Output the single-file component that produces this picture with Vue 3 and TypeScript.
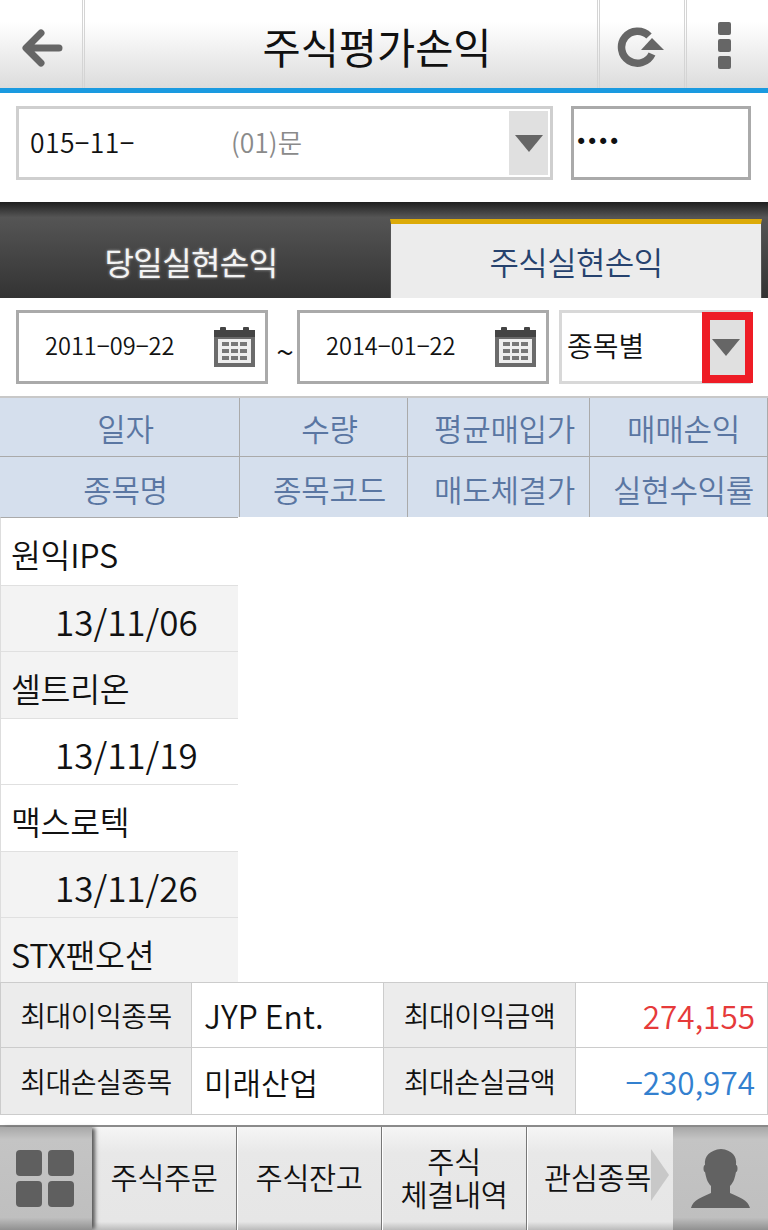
<script setup lang="ts">
type ListRow = {
    text: string;
    isDate: boolean;
    isShaded: boolean;
};

const headerTop = ["일자", "수량", "평균매입가", "매매손익"];
const headerBottom = ["종목명", "종목코드", "매도체결가", "실현수익률"];

const listRows: ListRow[] = [
    { text: "원익IPS", isDate: false, isShaded: false },
    { text: "13/11/06", isDate: true, isShaded: true },
    { text: "셀트리온", isDate: false, isShaded: true },
    { text: "13/11/19", isDate: true, isShaded: false },
    { text: "맥스로텍", isDate: false, isShaded: false },
    { text: "13/11/26", isDate: true, isShaded: true },
    { text: "STX팬오션", isDate: false, isShaded: true },
];

const dates = ["2011−09−22", "2014−01−22"];
</script>

<template>
    <div class="page">
        <header class="top-bar">
            <div class="top-bar__btn top-bar__btn--back">
                <svg width="46" height="42" viewBox="0 0 46 42">
                    <path d="M22 6 L7 21 L22 36 M8 21 H40" fill="none" stroke="#666" stroke-width="7" stroke-linecap="round" stroke-linejoin="round" />
                </svg>
            </div>
            <h1 class="top-bar__title">주식평가손익</h1>
            <div class="top-bar__btn top-bar__btn--refresh">
                <svg width="48" height="42" viewBox="0 0 48 42">
                    <path d="M35 28 A16 16 0 1 1 32 10" fill="none" stroke="#666" stroke-width="7.5" />
                    <path d="M35 12 L24 24 L47 24 Z" fill="#666" />
                </svg>
            </div>
            <div class="top-bar__btn top-bar__btn--more">
                <span class="dot" /><span class="dot" /><span class="dot" />
            </div>
        </header>

        <section class="account">
            <div class="account__select">
                <span class="account__no">015−11−</span>
                <span class="account__name">(01)문</span>
                <span class="arrow-box"><span class="arrow" /></span>
            </div>
            <div class="account__pw">••••</div>
        </section>

        <nav class="tabs">
            <div class="tabs__item">당일실현손익</div>
            <div class="tabs__item tabs__item--active">주식실현손익</div>
        </nav>

        <section class="filter">
            <template v-for="(date, i) in dates" :key="date">
                <span v-if="i === 1" class="filter__tilde">~</span>
                <div class="date-box">
                    <span class="date-box__text">{{ date }}</span>
                    <svg width="42" height="42" viewBox="0 0 42 42">
                        <rect x="1" y="4" width="41" height="37" fill="#6b6b6b" />
                        <rect x="1" y="4" width="41" height="7" fill="#444" />
                        <rect x="7" y="1" width="6" height="6" rx="1" fill="#444" />
                        <rect x="30" y="1" width="6" height="6" rx="1" fill="#444" />
                        <rect x="5" y="13" width="33" height="24" fill="#eee" />
                        <g fill="#777">
                            <rect x="9" y="16" width="7" height="4" /><rect x="18" y="16" width="7" height="4" /><rect x="27" y="16" width="7" height="4" />
                            <rect x="9" y="23" width="7" height="4" /><rect x="18" y="23" width="7" height="4" /><rect x="27" y="23" width="7" height="4" />
                            <rect x="9" y="30" width="7" height="4" /><rect x="18" y="30" width="7" height="4" /><rect x="27" y="30" width="7" height="4" />
                        </g>
                    </svg>
                </div>
            </template>
            <div class="kind-select">
                <span class="kind-select__text">종목별</span>
                <span class="kind-select__btn"><span class="arrow" /></span>
            </div>
        </section>

        <section class="grid-head">
            <div v-for="label in headerTop" :key="label" class="grid-head__cell">{{ label }}</div>
            <div v-for="label in headerBottom" :key="label" class="grid-head__cell grid-head__cell--bottom">{{ label }}</div>
        </section>

        <section class="list">
            <div
                v-for="row in listRows"
                :key="row.text"
                class="list__row"
                :class="{ 'list__row--date': row.isDate, 'list__row--shaded': row.isShaded }"
            >
                {{ row.text }}
            </div>
        </section>

        <section class="summary">
            <div class="summary__label">최대이익종목</div>
            <div class="summary__value summary__value--latin">JYP Ent.</div>
            <div class="summary__label">최대이익금액</div>
            <div class="summary__value summary__value--num summary__value--up">274,155</div>
            <div class="summary__label">최대손실종목</div>
            <div class="summary__value">미래산업</div>
            <div class="summary__label">최대손실금액</div>
            <div class="summary__value summary__value--num summary__value--down">−230,974</div>
        </section>

        <footer class="bottom-bar">
            <div class="bottom-bar__side bottom-bar__side--left">
                <div class="tiles"><span /><span /><span /><span /></div>
            </div>
            <div class="bottom-bar__item">주식주문</div>
            <div class="bottom-bar__item">주식잔고</div>
            <div class="bottom-bar__item">주식<br />체결내역</div>
            <div class="bottom-bar__item bottom-bar__item--last">
                관심종목
                <span class="bottom-bar__more" />
            </div>
            <div class="bottom-bar__side bottom-bar__side--right">
                <svg width="62" height="62" viewBox="0 0 62 62">
                    <path d="M1 60 C3 52 12 49 21 45 L21 38 C17 34 16 29 15 24 C13 24 13 17 15 17 C14 8 20 2 31 1 C42 2 47 8 46 17 C48 17 48 24 46 24 C45 29 44 34 40 38 L40 45 C49 49 58 52 60 60 Z" fill="#626262" />
                </svg>
            </div>
        </footer>
    </div>
</template>

<style>
    html,
    body {
        margin: 0;
        background: #fff;
    }
</style>

<style scoped>
    .page {
        width: 768px;
        height: 1230px;
        display: flex;
        flex-direction: column;
        overflow: hidden;
        background: #fff;
        color: #111;
        font-family: "Noto Sans CJK KR", "Noto Sans", sans-serif;
        font-weight: 350;
    }

    .top-bar {
        flex: none;
        height: 88px;
        display: flex;
        box-sizing: content-box;
        border-bottom: 5px solid #1a9ae0;
        background: linear-gradient(#fff 0%, #fff 25%, #dcdcdc 100%);
    }

    .top-bar__btn {
        flex: none;
        display: flex;
        align-items: center;
        justify-content: center;
        box-sizing: border-box;
        padding-top: 6px;
    }

    .top-bar__btn--back {
        width: 85px;
        padding: 8px 0 0 2px;
        border-right: 3px double #d4d4d4;
    }

    .top-bar__btn--refresh {
        width: 87px;
        padding-right: 3px;
        border-left: 3px double #d4d4d4;
    }

    .top-bar__btn--more {
        width: 84px;
        flex-direction: column;
        gap: 4px;
        padding: 3px 7px 0 0;
        border-left: 3px double #d4d4d4;
    }

    .dot {
        width: 13px;
        height: 13px;
        border-radius: 2px;
        background: #666;
    }

    .top-bar__title {
        flex: 1;
        margin: 0;
        padding-left: 72px;
        text-align: center;
        font-size: 41.5px;
        font-weight: 400;
        line-height: 92px;
        color: #111;
    }

    .account {
        flex: none;
        display: flex;
        gap: 18px;
        padding: 13px 17px 22px 16px;
    }

    .account__select {
        position: relative;
        flex: none;
        box-sizing: border-box;
        width: 537px;
        height: 74px;
        display: flex;
        align-items: center;
        padding: 0 0 4px 11px;
        border: 3px solid #cfcfcf;
        font-size: 26.5px;
    }

    .account__no {
        width: 201px;
        letter-spacing: 0.4px;
    }

    .account__name {
        color: #8a8a8a;
    }

    .arrow-box {
        position: absolute;
        top: 2px;
        right: 2px;
        bottom: 2px;
        width: 39px;
        display: flex;
        align-items: center;
        justify-content: center;
        background: #e0e0e0;
    }

    .arrow {
        width: 0;
        height: 0;
        border-left: 14px solid transparent;
        border-right: 14px solid transparent;
        border-top: 17px solid #666;
    }

    .account__pw {
        flex: none;
        box-sizing: border-box;
        width: 180px;
        height: 74px;
        padding-left: 1px;
        border: 3px solid #aaa;
        font-family: "DejaVu Sans", sans-serif;
        font-size: 21px;
        font-weight: 400;
        line-height: 66px;
        letter-spacing: -1.4px;
        color: #111;
    }

    .tabs {
        flex: none;
        height: 96px;
        display: flex;
        background: linear-gradient(#1f1f1f 0%, #555 16%, #333 100%);
    }

    .tabs__item {
        flex: none;
        width: 382px;
        padding-top: 30px;
        box-sizing: border-box;
        text-align: center;
        font-size: 32px;
        font-weight: 400;
        line-height: 58px;
        letter-spacing: -0.6px;
        color: #f4f4f4;
        text-shadow: 0 0 3px #aaa;
    }

    .tabs__item--active {
        width: 372px;
        margin: 17px 6px 0 8px;
        padding-top: 8px;
        border: solid #555;
        border-width: 0 1px;
        border-top: 5px solid #dcaa08;
        background: #ececec;
        font-weight: 350;
        color: #26426e;
        text-shadow: none;
    }

    .filter {
        flex: none;
        display: flex;
        align-items: center;
        height: 74px;
        margin-top: 12px;
        padding-left: 16px;
    }

    .date-box {
        flex: none;
        box-sizing: border-box;
        width: 252px;
        height: 74px;
        display: flex;
        align-items: center;
        justify-content: space-between;
        padding: 0 10px 0 26px;
        border: 3px solid #aaa;
    }

    .date-box__text {
        padding-bottom: 4px;
        font-size: 23.6px;
    }

    .filter__tilde {
        flex: none;
        width: 29px;
        padding: 6px 0 0 5px;
        box-sizing: border-box;
        text-align: center;
        font-size: 32px;
    }

    .kind-select {
        position: relative;
        flex: none;
        box-sizing: border-box;
        width: 192px;
        height: 74px;
        margin-left: 10px;
        display: flex;
        align-items: center;
        padding: 0 0 4px 5px;
        border: 3px solid #d8d8d8;
        font-size: 28px;
    }

    .kind-select__btn {
        position: absolute;
        top: -1px;
        right: -5px;
        width: 51px;
        height: 71px;
        box-sizing: border-box;
        display: flex;
        align-items: center;
        justify-content: center;
        padding-right: 3px;
        border: 8px solid #ee1c25;
        background: #e0e0e0;
    }

    .grid-head {
        flex: none;
        display: grid;
        grid-template-columns: 240px 168px 182px 178px;
        grid-template-rows: 59px 60px;
        margin-top: 12px;
        box-sizing: border-box;
        border-top: 2px solid #c8c8c8;
        background: #d5dfed;
    }

    .grid-head__cell {
        display: flex;
        align-items: center;
        justify-content: center;
        box-sizing: border-box;
        padding-left: 12px;
        border-right: 1px solid #aaa;
        border-bottom: 1px solid #aaa;
        font-size: 31px;
        letter-spacing: -0.3px;
        color: #5a76a2;
        white-space: nowrap;
    }

    .grid-head__cell--bottom {
        padding-top: 3px;
        border-bottom: 0;
    }

    .grid-head__cell:nth-child(4n) {
        padding-left: 10px;
    }

    .list {
        flex: none;
        width: 238px;
        height: 465px;
        box-sizing: border-box;
        border-top: 1px solid #aaa;
        border-left: 1px solid #ddd;
        overflow: hidden;
    }

    .list__row {
        box-sizing: border-box;
        height: 66.5px;
        padding-left: 10px;
        border-bottom: 1px solid #e0e0e0;
        font-size: 32.5px;
        line-height: 71px;
        letter-spacing: -0.3px;
        white-space: nowrap;
        background: #fff;
    }

    .list__row:first-child {
        height: 67.5px;
    }

    .list__row--date {
        padding-left: 54px;
        font-size: 35px;
        line-height: 70px;
        letter-spacing: 0;
    }

    .list__row--shaded {
        background: #f3f3f3;
    }

    .summary {
        flex: none;
        display: grid;
        grid-template-columns: 191px 192px 192px 191px;
        grid-template-rows: 65px 66px;
        box-sizing: border-box;
        height: 133px;
        border: 1px solid #ccc;
    }

    .summary__label,
    .summary__value {
        display: flex;
        align-items: center;
        box-sizing: border-box;
        white-space: nowrap;
    }

    .summary__label {
        justify-content: center;
        border-right: 1px solid #ccc;
        border-bottom: 1px solid #ccc;
        background: #ececec;
        font-size: 28px;
        letter-spacing: -0.5px;
    }

    .summary__value {
        padding-left: 12px;
        border-right: 1px solid #ccc;
        border-bottom: 1px solid #ccc;
        font-size: 31px;
    }

    .summary__label:nth-child(n + 5),
    .summary__value:nth-child(n + 5) {
        border-bottom: 0;
    }

    .summary__value--latin {
        font-size: 32px;
    }

    .summary__value--num {
        justify-content: flex-end;
        padding-right: 12px;
        border-right: 0;
        font-size: 31.5px;
    }

    .summary__value--up {
        color: #e63a3a;
    }

    .summary__value--down {
        color: #3380cf;
    }

    .bottom-bar {
        flex: none;
        height: 105px;
        margin-top: 10px;
        display: flex;
        box-sizing: border-box;
        border-top: 2px solid #8a8a8a;
        background: linear-gradient(#f5f5f5 0%, #e8e8e8 25%, #e6e6e6 92%, #bbb 100%);
    }

    .bottom-bar__side {
        flex: none;
        display: flex;
        align-items: center;
        justify-content: center;
        background: linear-gradient(#a8a8a8 0%, #c4c4c4 12%, #bfbfbf 88%, #909090 100%);
    }

    .bottom-bar__side--left {
        position: relative;
        width: 92px;
        padding-right: 2px;
        box-sizing: border-box;
        box-shadow: 4px 0 4px -1px #555;
    }

    .bottom-bar__side--right {
        width: 95px;
        margin-left: 1px;
    }

    .tiles {
        display: grid;
        grid-template-columns: 26px 26px;
        grid-template-rows: 26px 26px;
        gap: 5px 6px;
    }

    .tiles span {
        border-radius: 4px;
        background: #5f5f5f;
    }

    .bottom-bar__item {
        position: relative;
        isolation: isolate;
        flex: none;
        box-sizing: border-box;
        width: 145px;
        display: flex;
        align-items: center;
        justify-content: center;
        padding-bottom: 4px;
        text-align: center;
        border-right: 1px solid #777;
        box-shadow: 1px 0 0 #fff;
        font-size: 29.5px;
        line-height: 33px;
        letter-spacing: -0.4px;
    }

    .bottom-bar__item--last {
        padding-right: 4px;
        border-right: 0;
        box-shadow: none;
    }

    .bottom-bar__more {
        position: absolute;
        top: 22px;
        right: 3px;
        width: 0;
        height: 0;
        border-top: 26px solid transparent;
        border-bottom: 26px solid transparent;
        border-left: 18px solid #c8c8c8;
        z-index: -1;
    }
</style>
